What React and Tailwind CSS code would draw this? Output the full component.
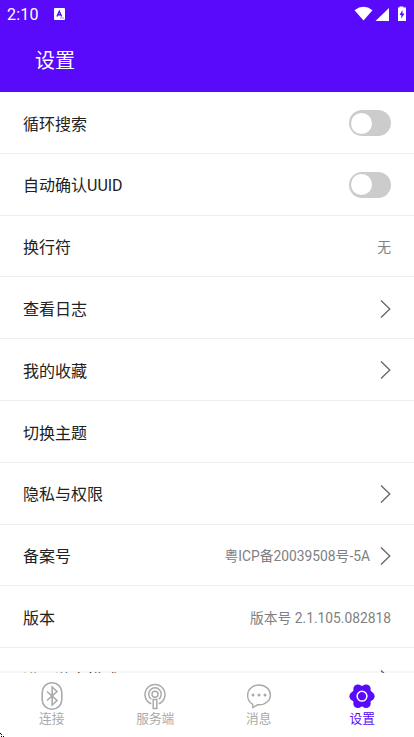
const rows = [
    { label: "循环搜索", type: "switch" },
    { label: "自动确认UUID", type: "switch" },
    { label: "换行符", value: "无" },
    { label: "查看日志", arrow: true },
    { label: "我的收藏", arrow: true },
    { label: "切换主题" },
    { label: "隐私与权限", arrow: true },
    { label: "备案号", value: "粤ICP备20039508号-5A", arrow: true },
    { label: "版本", value: "版本号 2.1.105.082818" },
    { label: "进入游客模式", arrow: true },
];

const StatusBar = () => (
    <div className="flex h-7 items-center justify-between pl-[7px] pr-[6px] text-white">
        <div className="flex items-center">
            <span className="w-[47px] pt-px text-[16px] leading-7 tracking-[0.2px]">2:10</span>
            <svg width="11" height="12" viewBox="0 0 11 12">
                <rect width="11" height="12" rx="1" fill="#fff" />
                <path d="M3 8.5 5.3 3.2 7.6 8.5M3.8 6.8h3" fill="none" stroke="#5a0afa" strokeWidth="1.4" />
                <path d="M6.5 10h1M8.5 10h1" stroke="#5a0afa" />
            </svg>
        </div>
        <svg width="54" height="16" viewBox="0 0 54 16" fill="#fff">
            <path d="M0.500 4.300Q9.500-2.600 18.500 4.300L9.500 14.600Z" />
            <path d="M35 2v13H21.500Z" />
            <path d="M45.500 0.500h4v1h2.500v13.500h-8V1.500h1.500Z" />
            <path d="M48.500 4 45.500 9h1.800v3.500L50.500 7.500h-2Z" fill="#5a0afa" />
        </svg>
    </div>
);

const Arrow = () => (
    <svg className="ml-[10px]" width="11" height="20" viewBox="0 0 11 20" fill="none">
        <path d="M1 1.500 9.800 10 1 18.500" stroke="#666" strokeWidth="1.300" />
    </svg>
);

const Switch = () => (
    <span className="flex h-[26px] w-[42px] items-center rounded-full bg-[#ccc] pl-[2px]">
        <span className="h-[21px] w-[21px] rounded-full bg-white" />
    </span>
);

const SettingRow = ({ row }) => (
    <div className="flex h-[61.800px] shrink-0 items-center justify-between border-b border-[#eee] px-[23px] pt-[1.500px]">
        <span className="pt-[3px] text-[16px] text-[#222]">{row.label}</span>
        <div className="flex items-center">
            {row.type === "switch" && <Switch />}
            {row.value && <span className="pt-px text-[13.800px] text-[#808080]">{row.value}</span>}
            {row.arrow && <Arrow />}
        </div>
    </div>
);

const BluetoothIcon = () => (
    <svg width="28" height="28" viewBox="0 0 28 28" fill="none" stroke="#aaa" strokeWidth="1.600">
        <rect x="4.200" y="0.800" width="19.600" height="26.400" rx="9.500" />
        <path d="M9 9.500 19 18.500 14.200 23V5L19 9.500 9 18.500" />
    </svg>
);

const ServerIcon = () => (
    <svg width="28" height="28" viewBox="0 0 28 28" fill="none" stroke="#aaa" strokeWidth="1.500">
        <path d="M10.300 21.800A10 10 0 1 1 17.700 21.800" />
        <path d="M10.300 17.200A6.300 6.300 0 1 1 17.700 17.200" />
        <circle cx="14" cy="12.300" r="3" />
        <path d="M12.200 17.500h3.600v9h-3.600Z" />
    </svg>
);

const MessageIcon = () => (
    <svg width="28" height="28" viewBox="0 0 28 28" fill="none" stroke="#aaa" strokeWidth="1.400">
        <path d="M7.800 22.300C4.500 20.400 2.600 17.200 2.600 13.500 2.600 7.700 7.500 3 14 3s11.400 4.300 11.400 9.900S20.500 22.800 14 22.800h-1.300L7.800 25.600Z" />
        <g fill="#aaa" stroke="none">
            <circle cx="8" cy="13" r="1.500" />
            <circle cx="14" cy="13" r="1.500" />
            <circle cx="20" cy="13" r="1.500" />
        </g>
    </svg>
);

const SettingsIcon = () => (
    <svg width="28" height="28" viewBox="0 0 28 28" fill="#5a0afa">
        <circle cx="14" cy="14.200" r="10.400" />
        <circle cx="6" cy="14.200" r="4.600" />
        <circle cx="22" cy="14.200" r="4.600" />
        <circle cx="9.900" cy="7" r="4.600" />
        <circle cx="18.100" cy="7" r="4.600" />
        <circle cx="9.900" cy="21.400" r="4.600" />
        <circle cx="18.100" cy="21.400" r="4.600" />
        <circle cx="14" cy="14.200" r="4.900" stroke="#fff" strokeWidth="1.500" />
    </svg>
);

const tabs = [
    { label: "连接", icon: BluetoothIcon },
    { label: "服务端", icon: ServerIcon },
    { label: "消息", icon: MessageIcon },
    { label: "设置", icon: SettingsIcon, active: true },
];

const App = () => {
    return (
        <div className="relative flex h-[737px] w-[414px] flex-col overflow-hidden bg-white font-['Roboto','Noto_Sans_CJK_SC',sans-serif]">
            <header className="h-[92px] shrink-0 bg-[#5a0afa]">
                <StatusBar />
                <h1 className="pl-[35px] pt-px text-[20px] leading-[64px] text-white">设置</h1>
            </header>

            <main className="flex min-h-0 flex-1 flex-col overflow-hidden">
                {rows.map((row) => (
                    <SettingRow key={row.label} row={row} />
                ))}
            </main>

            <nav className="relative grid h-[64px] shrink-0 grid-cols-4 bg-white shadow-[0_-2px_1px_rgba(0,0,0,0.03)]">
                {tabs.map(({ label, icon: Icon, active }) => (
                    <div key={label} className="flex flex-col items-center pt-[9px]">
                        <Icon />
                        <span className={`text-[12.700px] leading-[18px] ${active ? "text-[#5a0afa]" : "text-[#aaa]"}`}>
                            {label}
                        </span>
                    </div>
                ))}
            </nav>

            {/* Bottom left window corner */}
            <svg className="absolute bottom-0 left-0" width="4" height="4" viewBox="0 0 4 4">
                <path d="M0 0h1v1H0ZM1 1h1v1H1ZM1 3h1v1H1ZM3 3h1v1H3Z" />
            </svg>
        </div>
    );
};

export default App;
